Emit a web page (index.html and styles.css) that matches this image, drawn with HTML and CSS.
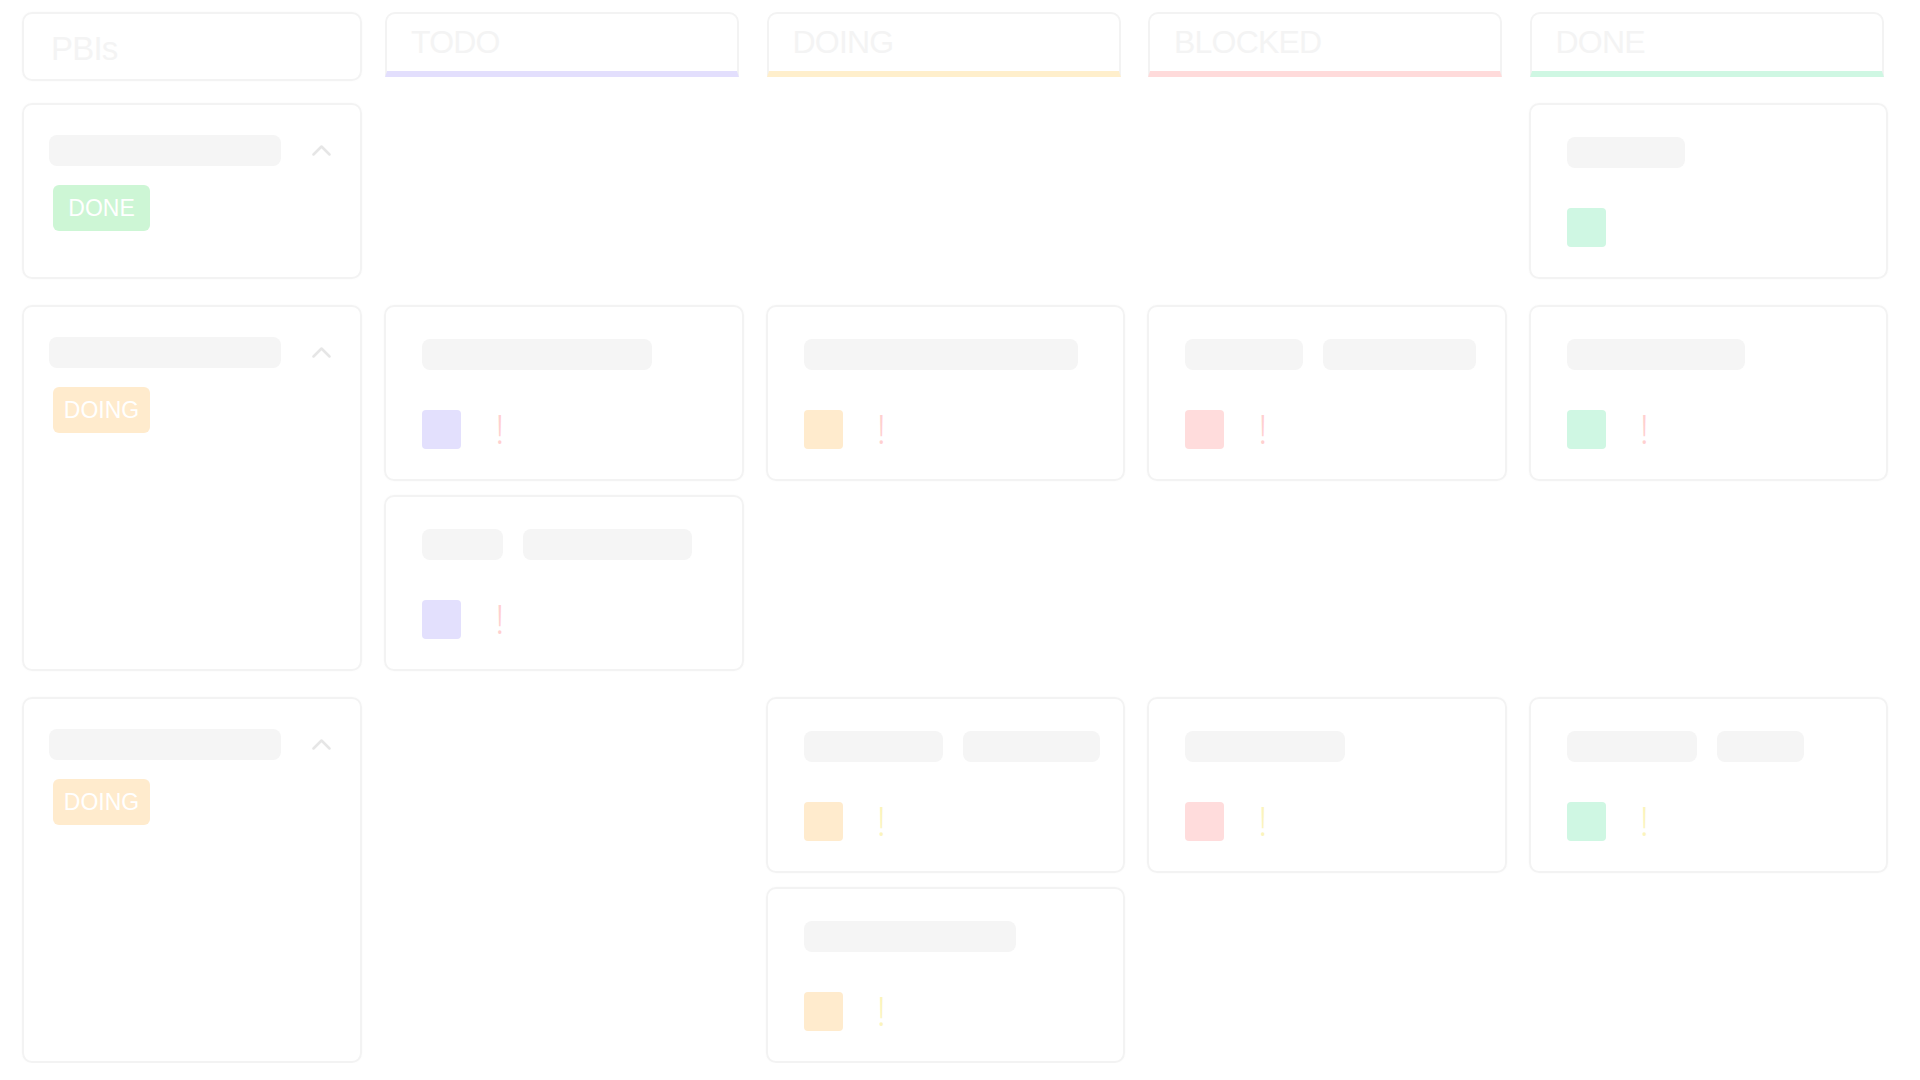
FILE: index.html
```html
<!DOCTYPE html>
<html lang="en">
<head>
<meta charset="utf-8">
<title>Board</title>
<link rel="stylesheet" href="styles.css">
</head>
<body>
<div class="page">
  <div class="grid head-row">
    <div class="pbi-head">PBIs</div>
    <div class="col-head todo">TODO</div>
    <div class="col-head doing">DOING</div>
    <div class="col-head blocked">BLOCKED</div>
    <div class="col-head done">DONE</div>
  </div>

  <div class="rows">
    <!-- Row 1 -->
    <div class="grid row">
      <div class="pbi-card">
        <div class="pbi-top">
          <div class="pill pbi-pill"></div>
          <svg class="chev" width="19" height="11" viewBox="0 0 19 11"><polyline points="1.5,9.5 9.5,1.5 17.5,9.5" fill="none" stroke="#e6e6e6" stroke-width="2.5" stroke-linecap="round" stroke-linejoin="round"/></svg>
        </div>
        <div class="badge badge-done">DONE</div>
      </div>
      <div class="cell"></div>
      <div class="cell"></div>
      <div class="cell"></div>
      <div class="cell">
        <div class="card">
          <div class="pills"><div class="pill" style="width:118px"></div></div>
          <div class="meta"><div class="sq sq-done"></div></div>
        </div>
      </div>
    </div>

    <!-- Row 2 -->
    <div class="grid row">
      <div class="pbi-card">
        <div class="pbi-top">
          <div class="pill pbi-pill"></div>
          <svg class="chev" width="19" height="11" viewBox="0 0 19 11"><polyline points="1.5,9.5 9.5,1.5 17.5,9.5" fill="none" stroke="#e6e6e6" stroke-width="2.5" stroke-linecap="round" stroke-linejoin="round"/></svg>
        </div>
        <div class="badge badge-doing">DOING</div>
      </div>
      <div class="cell">
        <div class="card">
          <div class="pills"><div class="pill" style="width:230px"></div></div>
          <div class="meta"><div class="sq sq-todo"></div><span class="bang red">!</span></div>
        </div>
        <div class="card">
          <div class="pills"><div class="pill" style="width:81px"></div><div class="pill" style="width:169px"></div></div>
          <div class="meta"><div class="sq sq-todo"></div><span class="bang red">!</span></div>
        </div>
      </div>
      <div class="cell">
        <div class="card">
          <div class="pills"><div class="pill" style="width:274px"></div></div>
          <div class="meta"><div class="sq sq-doing"></div><span class="bang red">!</span></div>
        </div>
      </div>
      <div class="cell">
        <div class="card">
          <div class="pills"><div class="pill" style="width:118px"></div><div class="pill" style="width:153px"></div></div>
          <div class="meta"><div class="sq sq-blocked"></div><span class="bang red">!</span></div>
        </div>
      </div>
      <div class="cell">
        <div class="card">
          <div class="pills"><div class="pill" style="width:178px"></div></div>
          <div class="meta"><div class="sq sq-done"></div><span class="bang red">!</span></div>
        </div>
      </div>
    </div>

    <!-- Row 3 -->
    <div class="grid row">
      <div class="pbi-card">
        <div class="pbi-top">
          <div class="pill pbi-pill"></div>
          <svg class="chev" width="19" height="11" viewBox="0 0 19 11"><polyline points="1.5,9.5 9.5,1.5 17.5,9.5" fill="none" stroke="#e6e6e6" stroke-width="2.5" stroke-linecap="round" stroke-linejoin="round"/></svg>
        </div>
        <div class="badge badge-doing">DOING</div>
      </div>
      <div class="cell"></div>
      <div class="cell">
        <div class="card">
          <div class="pills"><div class="pill" style="width:139px"></div><div class="pill" style="width:137px"></div></div>
          <div class="meta"><div class="sq sq-doing"></div><span class="bang yellow">!</span></div>
        </div>
        <div class="card">
          <div class="pills"><div class="pill" style="width:212px"></div></div>
          <div class="meta"><div class="sq sq-doing"></div><span class="bang yellow">!</span></div>
        </div>
      </div>
      <div class="cell">
        <div class="card">
          <div class="pills"><div class="pill" style="width:160px"></div></div>
          <div class="meta"><div class="sq sq-blocked"></div><span class="bang yellow">!</span></div>
        </div>
      </div>
      <div class="cell">
        <div class="card">
          <div class="pills"><div class="pill" style="width:130px"></div><div class="pill" style="width:87px"></div></div>
          <div class="meta"><div class="sq sq-done"></div><span class="bang yellow">!</span></div>
        </div>
      </div>
    </div>
  </div>
</div>
</body>
</html>
```

FILE: styles.css
```css
* {
  box-sizing: border-box;
}

html, body {
  margin: 0;
  padding: 0;
  background: #ffffff;
}

body {
  font-family: "Liberation Sans", Arial, sans-serif;
}

.page {
  padding: 12px 0 0 22px;
  width: 1888px;
}

.grid {
  display: grid;
  grid-template-columns: 340px repeat(4, minmax(0, 1fr));
  column-gap: 22px;
}

.head-row {
  align-items: start;
  margin-bottom: 22px;
}

.pbi-head {
  height: 69px;
  border: 2px solid #f3f3f3;
  border-radius: 10px;
  box-shadow: 0 0 3px rgba(0, 0, 0, 0.025);
  padding: 18px 0 0 27px;
  font-size: 33px;
  line-height: 33px;
  letter-spacing: -0.8px;
  color: #f4f4f4;
}

.col-head {
  height: 65px;
  margin: 0 4.5px 0 1px;
  border: 2px solid #f3f3f3;
  border-bottom-width: 6px;
  border-radius: 10px 10px 0 0;
  padding: 12px 0 0 24px;
  font-size: 32px;
  line-height: 32px;
  letter-spacing: -0.8px;
  color: #f4f4f4;
}

.col-head.todo { border-bottom-color: #e3dffd; }
.col-head.doing { border-bottom-color: #ffefcc; }
.col-head.blocked { border-bottom-color: #ffdbdb; }
.col-head.done { border-bottom-color: #cff7e3; }

.rows {
  display: flex;
  flex-direction: column;
  gap: 26px;
}

.row {
  align-items: stretch;
}

.pbi-card {
  min-height: 176px;
  border: 2px solid #f3f3f3;
  border-radius: 10px;
  box-shadow: 0 0 3px rgba(0, 0, 0, 0.025);
  padding: 30px 27px 0 25px;
}

.pbi-top {
  display: flex;
  align-items: center;
  justify-content: space-between;
}

.pbi-pill {
  width: 232px;
}

.chev {
  display: block;
  margin-right: 2px;
}

.badge {
  width: 97px;
  height: 46px;
  margin: 19px 0 0 4px;
  border-radius: 6px;
  color: #ffffff;
  font-size: 23px;
  line-height: 46px;
  text-align: center;
}

.badge-done { background: #cdf6d5; }
.badge-doing { background: #ffebcd; }

.cell {
  display: flex;
  flex-direction: column;
  gap: 14px;
  min-width: 0;
}

.card {
  height: 176px;
  border: 2px solid #f3f3f3;
  border-radius: 10px;
  box-shadow: 0 0 3px rgba(0, 0, 0, 0.025);
  padding: 32px 20px 0 36px;
}

.pills {
  display: flex;
  gap: 20px;
}

.pill {
  height: 31px;
  border-radius: 8px;
  background: #f5f5f5;
  flex: none;
}

.meta {
  display: flex;
  align-items: center;
  margin-top: 39px;
  height: 40px;
}

.sq {
  width: 39px;
  height: 39px;
  border-radius: 4px;
}

.sq-todo { background: #e3e0fd; }
.sq-doing { background: #ffebcd; }
.sq-blocked { background: #ffdcdc; }
.sq-done { background: #cff7e3; }

.bang {
  margin-left: 34px;
  font-family: "Open Sans", "Liberation Sans", sans-serif;
  font-weight: 300;
  font-size: 40px;
  line-height: 40px;
}

.bang.red { color: #ffd0d0; }
.bang.yellow { color: #fbf4bd; }
```
